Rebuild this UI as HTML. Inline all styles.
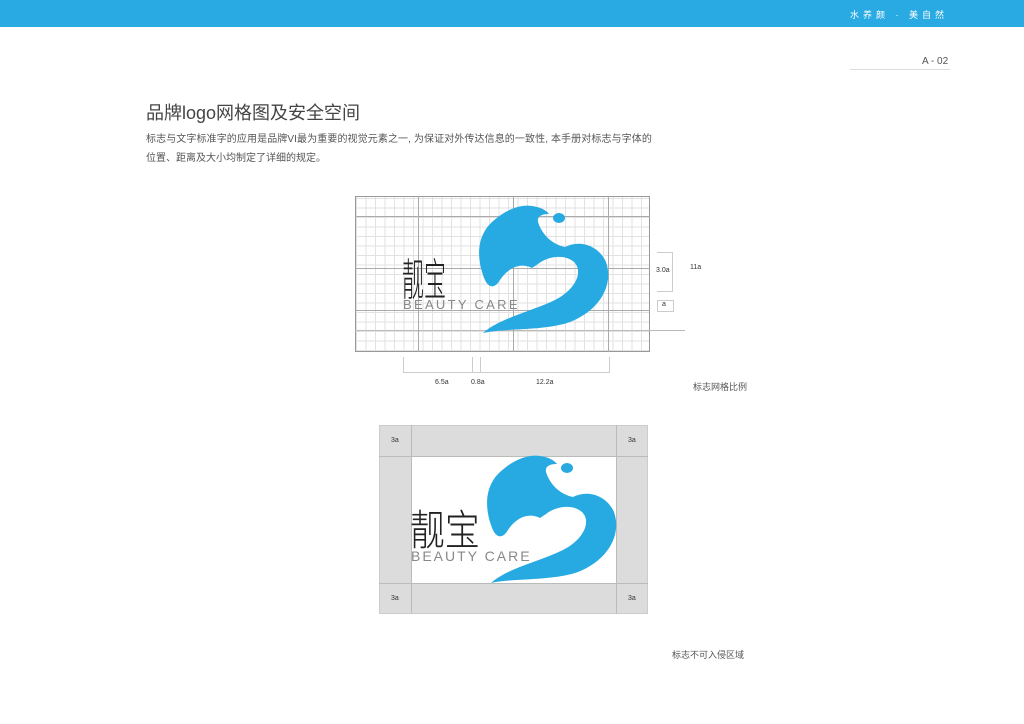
<!DOCTYPE html>
<html><head><meta charset="utf-8"><style>
body{margin:0;width:1024px;height:724px;background:#fff;position:relative;overflow:hidden;font-family:"Liberation Sans","Noto Sans CJK SC",sans-serif;color:#444}
.a{position:absolute;white-space:nowrap}
.bar{position:absolute;left:0;top:0;width:1024px;height:27px;background:#29aae2}
.grid{position:absolute;left:355px;top:196px;width:295px;height:156px;box-sizing:border-box;border:1px solid #999;
background-image:repeating-linear-gradient(90deg,#e2e2e2 0 1px,transparent 1px 9.5px),repeating-linear-gradient(0deg,#e2e2e2 0 1px,transparent 1px 9.5px)}
.ln{position:absolute;background:#bbb}
.s{font-size:7px;color:#333}
.cn{transform-origin:0 0;color:#222;font-weight:300}
</style></head><body>
<div class="bar"></div>
<div class="a" style="left:850px;top:8px;font-size:9px;color:#fff;letter-spacing:4px">水养颜 · 美自然</div>
<div class="a" style="left:922px;top:56px;font-size:10px;color:#555">A - 02</div>
<div class="ln" style="left:850px;top:69px;width:100px;height:1px;background:#ddd"></div>
<div class="a" style="left:146px;top:99px;font-size:18px;color:#444">品牌logo网格图及安全空间</div>
<div class="a" style="left:146px;top:130px;font-size:10px;color:#555;letter-spacing:0.1px">标志与文字标准字的应用是品牌VI最为重要的视觉元素之一, 为保证对外传达信息的一致性, 本手册对标志与字体的</div>
<div class="a" style="left:146px;top:149px;font-size:10px;color:#555">位置、距离及大小均制定了详细的规定。</div>

<div class="grid"></div>
<div class="ln" style="left:355px;top:216px;width:295px;height:1px;background:#aaa"></div>
<div class="ln" style="left:355px;top:268px;width:295px;height:1px;background:#aaa"></div>
<div class="ln" style="left:355px;top:310px;width:295px;height:1px;background:#aaa"></div>
<div class="ln" style="left:355px;top:330px;width:330px;height:1px;background:#bbb"></div>
<div class="ln" style="left:418px;top:196px;width:1px;height:156px;background:#aaa"></div>
<div class="ln" style="left:513px;top:196px;width:1px;height:156px;background:#aaa"></div>
<div class="ln" style="left:608px;top:196px;width:1px;height:156px;background:#aaa"></div>

<svg width="1024" height="724" style="position:absolute;left:0;top:0">
<defs><g id="lg">
<path fill="#27aae1" d="M532,268 C520,262 508,268 500,280 C494,290 487,288 483,275 C476,255 478,235 492,222 C505,210 520,204 532,206 C540,207 546,210 549,214 C542,214 537,216 538,222 C541,232 550,244 565,247 C578,240 598,244 606,262 C614,285 600,310 570,322 C545,331 505,328 483,333 C500,318 530,312 555,300 C575,290 584,272 574,262 C565,254 548,256 538,264 Z"/>
<ellipse cx="559" cy="218" rx="6" ry="5" fill="#27aae1"/>
</g></defs>
<use href="#lg"/>
</svg>
<div class="a cn" style="left:402px;top:244px;font-size:44px;transform:scaleX(0.5);letter-spacing:0px">靓宝</div>
<div class="a" style="left:403px;top:297px;font-size:13px;color:#888;letter-spacing:2.3px">BEAUTY CARE</div>
<div class="ln" style="left:657px;top:252px;width:15px;height:38px;background:none;border:1px solid #ccc;border-left:none"></div>
<div class="a s" style="left:656px;top:267px;background:#fff">3.0a</div>
<div class="a s" style="left:690px;top:264px">11a</div>
<div class="ln" style="left:657px;top:300px;width:15px;height:10px;background:none;border:1px solid #ccc"></div>
<div class="a s" style="left:662px;top:301px">a</div>
<div class="ln" style="left:403px;top:357px;width:205px;height:15px;background:none;border:1px solid #ccc;border-top:none"></div>
<div class="ln" style="left:472px;top:357px;width:1px;height:15px;background:#ccc"></div>
<div class="ln" style="left:480px;top:357px;width:1px;height:15px;background:#ccc"></div>
<div class="a s" style="left:435px;top:379px">6.5a</div>
<div class="a s" style="left:471px;top:379px">0.8a</div>
<div class="a s" style="left:536px;top:379px">12.2a</div>
<div class="a" style="left:693px;top:380px;font-size:9px;color:#555">标志网格比例</div>

<div class="ln" style="left:379px;top:425px;width:269px;height:189px;background:#dcdcdc;box-sizing:border-box;border:1px solid #ccc"></div>
<div class="ln" style="left:411px;top:425px;width:1px;height:189px;background:#bbb"></div>
<div class="ln" style="left:616px;top:425px;width:1px;height:189px;background:#bbb"></div>
<div class="ln" style="left:379px;top:456px;width:269px;height:1px;background:#bbb"></div>
<div class="ln" style="left:379px;top:583px;width:269px;height:1px;background:#bbb"></div>
<div class="ln" style="left:412px;top:457px;width:204px;height:126px;background:#fff"></div>
<div class="a s" style="left:391px;top:437px">3a</div>
<div class="a s" style="left:628px;top:437px">3a</div>
<div class="a s" style="left:391px;top:595px">3a</div>
<div class="a s" style="left:628px;top:595px">3a</div>
<svg width="1024" height="724" style="position:absolute;left:0;top:0">
<g transform="translate(8,250)"><use href="#lg"/></g>
</svg>
<div class="a cn" style="left:410px;top:497px;font-size:42px;transform:scaleX(0.83)">靓宝</div>
<div class="a" style="left:411px;top:548px;font-size:14px;color:#888;letter-spacing:2px">BEAUTY CARE</div>
<div class="a" style="left:672px;top:648px;font-size:9px;color:#555">标志不可入侵区域</div>
</body></html>
